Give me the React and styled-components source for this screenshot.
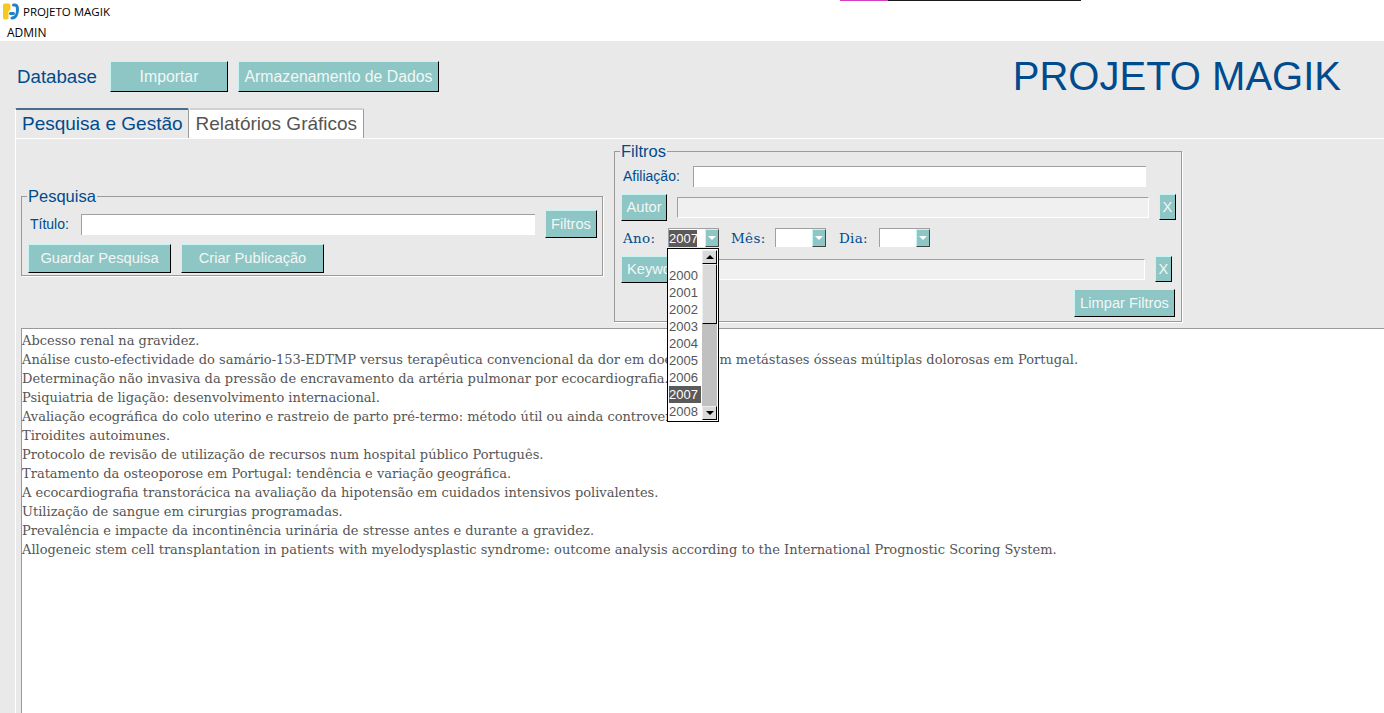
import React from 'react'
import styled, { createGlobalStyle } from 'styled-components'

const GlobalStyle = createGlobalStyle`
  html, body {
    margin: 0;
    padding: 0;
    background: #fff;
    overflow: hidden;
  }
  #root {
    height: 713px;
  }
  * {
    box-sizing: border-box;
  }
`

const Page = styled.div`
  position: relative;
  width: 1384px;
  height: 713px;
  overflow: hidden;
  display: flex;
  flex-direction: column;
  font-family: "Liberation Sans", Arial, sans-serif;
`

const ScreenEdge = styled.div`
  position: absolute;
  top: 0;
  left: 840px;
  width: 241px;
  height: 1px;
  background: linear-gradient(to right, #d63fc4 0 48px, #1b1b1b 48px);
`

const TitleBar = styled.div`
  height: 23px;
  display: flex;
  align-items: center;
  gap: 4px;
  padding-left: 3px;
  font: 11.5px "Open Sans", sans-serif;
  color: #000;
`

const MenuBar = styled.div`
  height: 18px;
  padding: 1px 0 0 7px;
  font: 12px/18px "Open Sans", sans-serif;
  color: #000;
`

const Window = styled.div`
  flex: 1;
  background: #e9e9e9;
  min-height: 0;
  display: flex;
  flex-direction: column;
`

const Header = styled.div`
  height: 67px;
  display: flex;
  align-items: flex-start;
  padding: 20px 43px 0 17px;
`

const DbLabel = styled.span`
  width: 93px;
  flex: none;
  font-size: 18.7px;
  line-height: 31px;
  color: #004b8d;
`

const BrandTitle = styled.h1`
  margin: -8px 0 0 auto;
  font-size: 40px;
  line-height: 46px;
  font-weight: 400;
  color: #004b8d;
`

const Button = styled.button`
  width: ${p => p.$w}px;
  height: ${p => p.$h || 31}px;
  padding: ${p => p.$pad || 0};
  margin: ${p => p.$m || 0};
  flex: none;
  background: #8dc6c4;
  color: #f2f7f6;
  font-family: "Liberation Sans", Arial, sans-serif;
  font-size: ${p => p.$fs || 15.8}px;
  text-align: ${p => p.$pad ? 'left' : 'center'};
  white-space: nowrap;
  overflow: hidden;
  border: 1px solid;
  border-color: #c6f5f3 #000 #000 #c6f5f3;
`

const TabRow = styled.div`
  height: 30px;
  display: flex;
  align-items: flex-end;
  padding-left: 15px;
`

const Tab = styled.div`
  height: 30px;
  padding: 0 ${p => p.$active ? 5 : 6}px 0 6px;
  font-size: 19px;
  line-height: 28px;
  color: ${p => p.$active ? '#004b8d' : '#555'};
  background: ${p => p.$active ? '#e9e9e9' : '#fff'};
  border-top: 2px solid ${p => p.$active ? '#4a6d8c' : '#d0d0d0'};
  border-left: 1px solid #fff;
  border-right: 1px solid #9a9a9a;
  border-radius: 2px 2px 0 0;
`

const Panel = styled.div`
  flex: 1;
  min-height: 0;
  margin-left: 15px;
  border-left: 1px solid #fff;
  border-top: 1px solid #fff;
  padding: 4px 0 0 5px;
  display: flex;
  flex-direction: column;
`

const FilterRow = styled.div`
  height: 185px;
  display: flex;
  align-items: flex-start;
  gap: 11px;
`

const GroupBox = styled.fieldset`
  margin: ${p => p.$top || 0}px 0 0;
  padding: 0;
  width: ${p => p.$w}px;
  height: ${p => p.$h}px;
  border: 1px solid #9a9a9a;
  box-shadow: 1px 1px 0 #fff;
  display: flex;
  flex-direction: column;
  min-width: 0;
`

const GroupTitle = styled.legend`
  margin-left: 5px;
  padding: 0 1px;
  font-size: 16.5px;
  line-height: 16px;
  color: #004b8d;
`

const Row = styled.div`
  display: flex;
  align-items: center;
  height: ${p => p.$h}px;
  padding: ${p => p.$pad || '0 0 0 6px'};
`

const FieldLabel = styled.label`
  width: ${p => p.$w}px;
  flex: none;
  font-size: 14px;
  color: #004b8d;
`

const SerifLabel = styled.label`
  width: ${p => p.$w}px;
  flex: none;
  font-family: "DejaVu Serif", serif;
  font-size: 13.5px;
  letter-spacing: 0.3px;
  color: #004b8d;
`

const TextInput = styled.div`
  width: ${p => p.$w}px;
  height: 21px;
  flex: none;
  background: ${p => p.$off ? '#f0f0f0' : '#fff'};
  border-style: solid;
  border-color: #a0a0a0 #fff #fff #a0a0a0;
  border-width: ${p => p.$off ? '1px' : '1px 0 0 1px'};
  margin: ${p => p.$m || 0};
`

const Combo = styled.div`
  width: 51px;
  height: 19px;
  flex: none;
  display: flex;
  justify-content: space-between;
  background: #fff;
  border-top: 1px solid #a0a0a0;
  border-left: 1px solid #a0a0a0;
  margin-right: ${p => p.$mr || 0}px;
`

const ComboValue = styled.span`
  height: 17px;
  width: 28px;
  background: #5a5a5a;
  color: #fff;
  font-size: 13px;
  line-height: 17px;
  margin-top: 1px;
`

const ComboArrow = styled.span`
  width: 14px;
  height: 18px;
  background: #8dc6c4;
  border: 1px solid;
  border-color: #c6f5f3 #444 #444 #c6f5f3;
  display: flex;
  align-items: center;
  justify-content: center;
  &::after {
    content: '';
    border: 4px solid transparent;
    border-top: 4px solid #fff;
    border-bottom: 0;
  }
`

const DropList = styled.div`
  position: absolute;
  left: 667px;
  top: 248px;
  width: 52px;
  height: 174px;
  background: #fff;
  border: 1px solid #000;
  display: flex;
  z-index: 5;
`

const YearList = styled.div`
  flex: 1;
  padding: 18px 1px 0;
`

const Year = styled.div`
  height: 17px;
  font-size: 13px;
  line-height: 17px;
  color: ${p => p.$on ? '#fff' : '#555'};
  background: ${p => p.$on ? '#5a5a5a' : 'transparent'};
`

const ScrollTrack = styled.div`
  width: 15px;
  margin: 1px 1px 1px 0;
  background: #c0c0c0;
  display: flex;
  flex-direction: column;
  justify-content: space-between;
  position: relative;
`

const ScrollBtn = styled.div`
  height: 14px;
  background: #d9d9d9;
  border: 1px solid;
  border-color: #eee #000 #000 #eee;
  display: flex;
  align-items: center;
  justify-content: center;
  &::after {
    content: '';
    border: 4px solid transparent;
    border-bottom: 4px solid #000;
    border-top: 0;
    ${p => p.$down && 'transform: rotate(180deg);'}
  }
`

const ScrollThumb = styled.div`
  position: absolute;
  top: 14px;
  left: 0;
  width: 15px;
  height: 60px;
  background: #d9d9d9;
  border: 1px solid;
  border-color: #eee #000 #000 #eee;
`

const ResultsBox = styled.div`
  flex: 1;
  min-height: 0;
  background: #fff;
  border-top: 1px solid #9a9a9a;
  border-left: 1px solid #9a9a9a;
  padding-top: 2px;
  font-family: "DejaVu Serif", serif;
  font-size: 13px;
  line-height: 19px;
  color: #555;
  white-space: nowrap;
`

const Logo = () => (
  <svg width="16" height="17" viewBox="0 0 16 17">
    <path d="M0 2.500C0 1 1 .5 2.500.5H5.500C7 .5 7.500 1.500 7.500 3V6C7.500 7 6.500 7.500 5.500 8V14.500C5.500 16 4.500 16.500 2.800 16.500S0 16 0 14.500z" fill="#f7c81e" />
    <g fill="none" stroke="#1f82c8" strokeWidth="3" strokeLinecap="round">
      <path d="M10.500 2H12C14 2 14.500 4 14.500 6.500C14.500 11 12.500 15 9 15" />
      <path d="M7.500 10.500H10.500" />
    </g>
  </svg>
)

const titles = [
  'Abcesso renal na gravidez.',
  'Análise custo-efectividade do samário-153-EDTMP versus terapêutica convencional da dor em doentes com metástases ósseas múltiplas dolorosas em Portugal.',
  'Determinação não invasiva da pressão de encravamento da artéria pulmonar por ecocardiografia.',
  'Psiquiatria de ligação: desenvolvimento internacional.',
  'Avaliação ecográfica do colo uterino e rastreio de parto pré-termo: método útil ou ainda controverso?',
  'Tiroidites autoimunes.',
  'Protocolo de revisão de utilização de recursos num hospital público Português.',
  'Tratamento da osteoporose em Portugal: tendência e variação geográfica.',
  'A ecocardiografia transtorácica na avaliação da hipotensão em cuidados intensivos polivalentes.',
  'Utilização de sangue em cirurgias programadas.',
  'Prevalência e impacte da incontinência urinária de stresse antes e durante a gravidez.',
  'Allogeneic stem cell transplantation in patients with myelodysplastic syndrome: outcome analysis according to the International Prognostic Scoring System.',
]

const years = ['2000', '2001', '2002', '2003', '2004', '2005', '2006', '2007', '2008']

export default function App() {
  return (
    <Page>
      <GlobalStyle />
      <ScreenEdge />
      <TitleBar><Logo />PROJETO MAGIK</TitleBar>
      <MenuBar>ADMIN</MenuBar>
      <Window>
        <Header>
          <DbLabel>Database</DbLabel>
          <Button $w={118}>Importar</Button>
          <Button $w={201} $m="0 0 0 10px">Armazenamento de Dados</Button>
          <BrandTitle>PROJETO MAGIK</BrandTitle>
        </Header>
        <TabRow>
          <Tab $active>Pesquisa e Gestão</Tab>
          <Tab>Relatórios Gráficos</Tab>
        </TabRow>
        <Panel>
          <FilterRow>
            <GroupBox $top={45} $w={582} $h={88}>
              <GroupTitle>Pesquisa</GroupTitle>
              <Row $h={40} $pad="0 0 0 8px">
                <FieldLabel $w={51}>Título:</FieldLabel>
                <TextInput $w={454} />
                <Button $w={52} $h={28} $fs={14.67} $m="0 0 0 10px">Filtros</Button>
              </Row>
              <Row $h={28}>
                <Button $w={143} $h={29} $fs={14.67}>Guardar Pesquisa</Button>
                <Button $w={143} $h={29} $fs={14.67} $m="0 0 0 10px">Criar Publicação</Button>
              </Row>
            </GroupBox>
            <GroupBox $w={568} $h={179}>
              <GroupTitle>Filtros</GroupTitle>
              <Row $h={34} $pad="0 0 0 8px">
                <FieldLabel $w={70}>Afiliação:</FieldLabel>
                <TextInput $w={453} />
              </Row>
              <Row $h={28}>
                <Button $w={46} $h={27} $fs={14.67}>Autor</Button>
                <TextInput $off $w={472} $m="0 0 0 10px" />
                <Button $w={17} $h={26} $fs={14.67} $m="0 0 0 10px">X</Button>
              </Row>
              <Row $h={33} $pad="0 0 0 8px">
                <SerifLabel $w={45}>Ano:</SerifLabel>
                <Combo $mr={12}><ComboValue>2007</ComboValue><ComboArrow /></Combo>
                <SerifLabel $w={44}>Mês:</SerifLabel>
                <Combo $mr={13}><span /><ComboArrow /></Combo>
                <SerifLabel $w={40}>Dia:</SerifLabel>
                <Combo><span /><ComboArrow /></Combo>
              </Row>
              <Row $h={30}>
                <Button $w={80} $h={27} $fs={14.67} $pad="0 0 0 5px">Keywords</Button>
                <TextInput $off $w={434} $m="0 0 0 10px" />
                <Button $w={17} $h={26} $fs={14.67} $m="0 0 0 10px">X</Button>
              </Row>
              <Row $h={37} $pad="0 6px 0 0">
                <Button $w={101} $h={28} $fs={14.67} $m="0 0 0 auto">Limpar Filtros</Button>
              </Row>
            </GroupBox>
          </FilterRow>
          <ResultsBox>
            {titles.map(t => <div key={t}>{t}</div>)}
          </ResultsBox>
        </Panel>
      </Window>
      <DropList>
        <YearList>
          {years.map(y => <Year key={y} $on={y === '2007'}>{y}</Year>)}
        </YearList>
        <ScrollTrack>
          <ScrollBtn />
          <ScrollThumb />
          <ScrollBtn $down />
        </ScrollTrack>
      </DropList>
    </Page>
  )
}
